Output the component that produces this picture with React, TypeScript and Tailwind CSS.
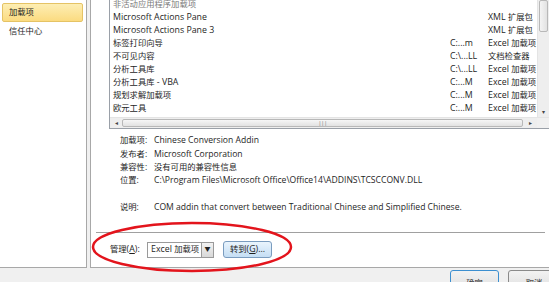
import React from 'react';

const font = { fontFamily: '"Open Sans", "Noto Sans CJK SC", sans-serif' };

// CJK runs are drawn a little smaller than Latin, as in the original dialog
function T({ children }: { children: string }) {
  const parts = children.split(/([\u3000-\u9fff\uff00-\uffef]+)/);
  return (
    <>
      {parts.map((p, i) =>
        /[\u3000-\u9fff\uff00-\uffef]/.test(p) ? (
          <span key={i} className="text-[8.3px]">{p}</span>
        ) : (
          <span key={i}>{p}</span>
        )
      )}
    </>
  );
}

const rows = [
  { name: '非活动应用程序加载项', loc: '', type: '', header: true },
  { name: 'Microsoft Actions Pane', loc: '', type: 'XML 扩展包' },
  { name: 'Microsoft Actions Pane 3', loc: '', type: 'XML 扩展包' },
  { name: '标签打印向导', loc: 'C:...m', type: 'Excel 加载项' },
  { name: '不可见内容', loc: 'C:\\...LL', type: '文档检查器' },
  { name: '分析工具库', loc: 'C:\\...LL', type: 'Excel 加载项' },
  { name: '分析工具库 - VBA', loc: 'C:...M', type: 'Excel 加载项' },
  { name: '规划求解加载项', loc: 'C:...M', type: 'Excel 加载项' },
  { name: '欧元工具', loc: 'C:...M', type: 'Excel 加载项' },
];

const details = [
  { label: '加载项:', value: 'Chinese Conversion Addin' },
  { label: '发布者:', value: 'Microsoft Corporation' },
  { label: '兼容性:', value: '没有可用的兼容性信息' },
  { label: '位置:', value: 'C:\\Program Files\\Microsoft Office\\Office14\\ADDINS\\TCSCCONV.DLL' },
];

function AddinList() {
  return (
    <div className="ml-[18px] h-[129px] shrink-0 flex flex-col border-l border-b border-[#9aa0a8] overflow-hidden">
      <div className="flex flex-1 min-h-0">
        <div className="flex-1 min-w-0 overflow-hidden">
          <div className="mt-[-2px] flex flex-col">
            {rows.map((r) => (
              <div key={r.name} className="h-[13px] shrink-0 flex items-center text-[8.8px] leading-none whitespace-nowrap">
                <span className={`pl-[3px] w-[340px] shrink-0 ${r.header ? 'text-[#7a7a7a]' : 'text-[#1e1e1e]'}`}>
                  <T>{r.name}</T>
                </span>
                <span className="w-[38px] shrink-0 text-[#1e1e1e]">{r.loc}</span>
                <span className="text-[#1e1e1e]">
                  <T>{r.type}</T>
                </span>
              </div>
            ))}
          </div>
        </div>
        <div className="w-[12px] shrink-0 bg-[#eeeeee] flex flex-col border-l border-[#e4e4e4]">
          <div className="mx-[1px] h-[32px] rounded-[2px] border border-[#b8b8b8] bg-gradient-to-r from-[#f4f4f4] to-[#e2e2e2]" />
          <div className="flex-1" />
          <div className="h-[10px] flex items-center justify-center text-[6px] text-[#444]">▾</div>
        </div>
      </div>
      <div className="h-[11px] shrink-0 flex bg-[#eeeeee] border-t border-[#e4e4e4]">
        <div className="w-[12px] flex items-center justify-center text-[6px] text-[#444]">◂</div>
        <div className="flex-1 my-[1px] rounded-[2px] border border-[#b8b8b8] bg-gradient-to-b from-[#f6f6f6] to-[#e2e2e2] flex items-center justify-center">
          <span className="text-[6px] text-[#777] tracking-[-0.5px]">|||</span>
        </div>
        <div className="w-[14px] flex items-center justify-center text-[6px] text-[#444]">▸</div>
        <div className="w-[12px] bg-[#f0f0f0]" />
      </div>
    </div>
  );
}

export default function App() {
  return (
    <div className="relative w-[549px] h-[282px] bg-[#f0f0f0] overflow-hidden text-[#1e1e1e]" style={font}>
      <div className="flex h-[268px]">
        <div className="w-[87px] shrink-0 bg-white border-r border-b border-[#a8a8a8] flex flex-col pt-[3px] pl-[2px] pr-[3px] text-[9px]">
          <div className="h-[19px] rounded-[2px] border border-[#e5c365] bg-gradient-to-b from-[#fdeeb3] to-[#fbdb80] flex items-center pl-[6px]">
            <T>加载项</T>
          </div>
          <div className="h-[19px] flex items-center pl-[7px]">
            <T>信任中心</T>
          </div>
        </div>
        <div className="w-[3px] shrink-0" />
        <div className="flex-1 min-w-0 bg-white border-l border-b border-[#a8a8a8] flex flex-col">
          <AddinList />
          <div className="pl-[29px] pt-[5px] flex flex-col text-[8.6px]">
            {details.map((d) => (
              <div key={d.label} className="h-[13.3px] flex items-center whitespace-nowrap">
                <span className="w-[34px] shrink-0">
                  <T>{d.label}</T>
                </span>
                <span>
                  <T>{d.value}</T>
                </span>
              </div>
            ))}
            <div className="h-[14px] mt-[13px] flex items-center whitespace-nowrap">
              <span className="w-[34px] shrink-0">
                <T>说明:</T>
              </span>
              <span>COM addin that convert between Traditional Chinese and Simplified Chinese.</span>
            </div>
          </div>
          <div className="mt-[18px] ml-[5px] mr-[4px] h-[1px] bg-[#a0a0a0]" />
          <div className="mt-[8px] pl-[19px] flex items-center text-[8.8px] whitespace-nowrap">
            <span className="w-[37px] shrink-0">
              <T>管理(</T>
              <span className="underline">A</span>):
            </span>
            <div className="w-[67px] h-[16px] shrink-0 border border-[#9a9a9a] bg-white flex items-center">
              <span className="flex-1 pl-[3px]">
                <T>Excel 加载项</T>
              </span>
              <div className="w-[12px] h-full border-l border-[#9a9a9a] bg-gradient-to-b from-[#f2f2f2] to-[#d8d8d8] flex items-center justify-center text-[6px] text-[#222]">▼</div>
            </div>
            <div className="ml-[9px] w-[49px] h-[17px] shrink-0 rounded-[3px] border border-[#7a9cbf] bg-gradient-to-b from-[#eaf4fd] to-[#c4def4] flex items-center justify-center">
              <T>转到(</T>
              <span className="underline">G</span>)...
            </div>
          </div>
        </div>
      </div>
      <div className="flex justify-end gap-[9px] mt-[2px] mr-[-11px] text-[8.8px]">
        <div className="w-[49px] h-[20px] rounded-[3px] border border-[#3c8fd0] bg-gradient-to-b from-[#f2f2f2] to-[#e0e0e0] flex items-start pt-[6px] justify-center">
          <T>确定</T>
        </div>
        <div className="w-[52px] h-[20px] rounded-[3px] border border-[#8a8a8a] bg-gradient-to-b from-[#f2f2f2] to-[#e0e0e0] flex items-start pt-[6px] justify-center">
          <T>取消</T>
        </div>
      </div>
      <svg className="absolute left-0 top-0 pointer-events-none" width="549" height="282">
        <ellipse cx="192" cy="247" rx="99" ry="24" fill="none" stroke="#e3141c" strokeWidth="2.5" />
      </svg>
    </div>
  );
}
